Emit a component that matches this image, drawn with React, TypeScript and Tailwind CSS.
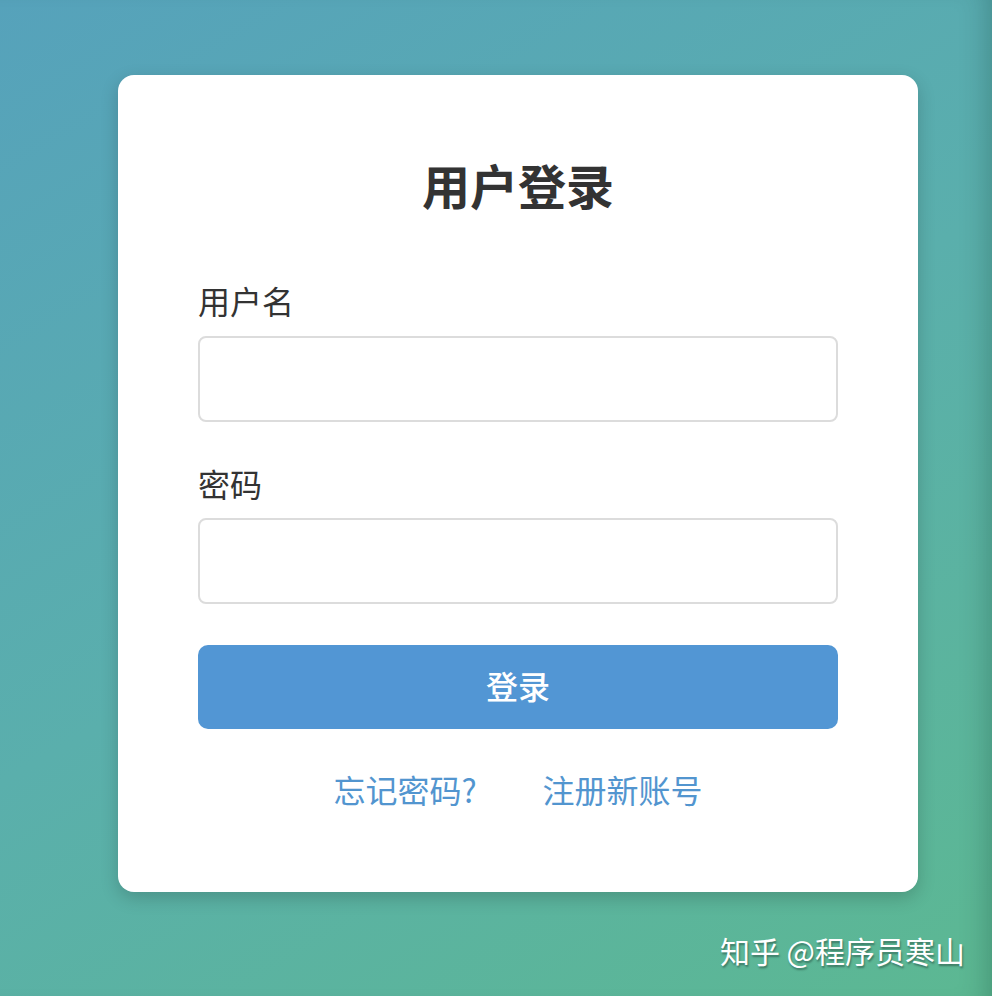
export default function App() {
  return (
    <div
      className="relative h-[996px] w-full overflow-hidden bg-[linear-gradient(150deg,#56a2bb_0%,#5aafac_50%,#5cb892_100%)] shadow-[inset_-26px_0_30px_-24px_rgba(0,40,30,0.28)]"
      style={{ fontFamily: '"Noto Sans CJK SC", "Noto Sans", sans-serif' }}
    >
      <div className="pl-[118px] pt-[75px]">
        <div className="w-[800px] rounded-[16px] bg-white px-[80px] pt-[81px] pb-[83px] shadow-[0_6px_18px_rgba(0,0,0,0.18)]">
          <h1 className="text-center text-[48px] leading-[56px] font-bold text-[#333]">用户登录</h1>

          <label className="mt-[68px] block text-[32px] leading-[40px] text-[#333]">用户名</label>
          <input
            type="text"
            className="mt-[16px] block h-[86px] w-full rounded-[8px] border-2 border-[#dcdcdc] bg-white outline-none"
          />

          <label className="mt-[41px] block text-[32px] leading-[40px] text-[#333]">密码</label>
          <input
            type="password"
            className="mt-[15px] block h-[86px] w-full rounded-[8px] border-2 border-[#dcdcdc] bg-white outline-none"
          />

          <button className="mt-[41px] flex h-[84px] w-full items-center justify-center rounded-[10px] bg-[#5296d4] pb-[4px] text-[32px] font-medium text-white">
            登录
          </button>

          <div className="mt-[40px] flex items-center justify-center gap-[66px] text-[32px] leading-[40px] text-[#5295cf]">
            <a>忘记密码?</a>
            <a>注册新账号</a>
          </div>
        </div>
      </div>

      <div className="absolute right-[27px] bottom-[26px] text-[30px] leading-[40px] text-white [text-shadow:1px_2px_2px_rgba(0,0,0,0.35)]">
        知乎 @程序员寒山
      </div>
    </div>
  );
}
